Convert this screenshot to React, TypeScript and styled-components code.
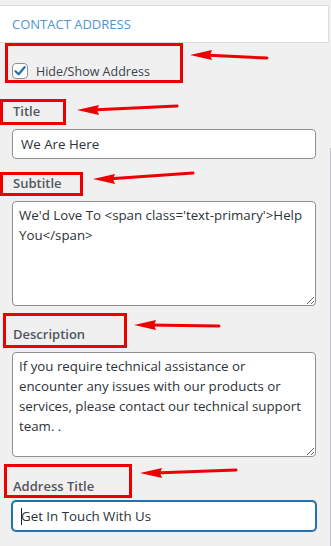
import styled, { createGlobalStyle } from 'styled-components';

const GlobalStyle = createGlobalStyle`
  html, body {
    margin: 0;
    padding: 0;
    background: #f0f0f1;
    font-family: 'Open Sans', 'Noto Sans', 'Liberation Sans', sans-serif;
  }
`;

const Page = styled.div`
  display: flex;
  flex-direction: row;
  min-height: 546px;
  width: 331px;
  padding-top: 5px;
  box-sizing: border-box;
  overflow: hidden;
`;

const Main = styled.div`
  width: 329px;
  flex-shrink: 0;
`;

const Rail = styled.div`
  flex: 1;
  display: flex;
  flex-direction: column;
`;

const RailLine = styled.div`
  margin-top: 143px;
  flex: 1;
  border-right: 1px solid #c3c4c7;
`;

const Header = styled.div`
  display: flex;
  align-items: center;
  height: 36px;
  padding-left: 12px;
  background: #fff;
  border-top: 1px solid #dcdcde;
  border-bottom: 1px solid #dcdcde;
  border-right: 1px solid #dcdcde;
  color: #4f94d4;
  font-size: 13px;
  text-transform: uppercase;
`;

const Fields = styled.div`
  display: flex;
  flex-direction: column;
`;

const NoteRow = styled.div<{ $top: number }>`
  display: flex;
  align-items: flex-start;
  margin-top: ${(p) => p.$top}px;
`;

const NoteBox = styled.div<{
  $left: number;
  $width: number;
  $height: number;
  $padLeft: number;
  $padBottom: number;
}>`
  display: flex;
  align-items: flex-end;
  box-sizing: border-box;
  flex-shrink: 0;
  margin-left: ${(p) => p.$left}px;
  width: ${(p) => p.$width}px;
  height: ${(p) => p.$height}px;
  padding-left: ${(p) => p.$padLeft}px;
  padding-bottom: ${(p) => p.$padBottom}px;
  border: 3px solid #ee0000;
`;

const Label = styled.label`
  font-size: 13px;
  line-height: 18px;
  font-weight: 600;
  color: #50575e;
  white-space: nowrap;
`;

const CheckRow = styled.label`
  display: flex;
  align-items: center;
  gap: 8px;
  height: 18px;
  font-size: 12.5px;
  color: #3c434a;
  white-space: nowrap;
`;

const CheckBox = styled.span`
  display: flex;
  align-items: center;
  justify-content: center;
  width: 16px;
  height: 16px;
  box-sizing: border-box;
  border: 1px solid #8c8f94;
  border-radius: 4px;
  background: #fff;
`;

const ArrowSvg = styled.svg<{ $gap: number; $top: number }>`
  flex-shrink: 0;
  margin-left: ${(p) => p.$gap}px;
  margin-top: ${(p) => p.$top}px;
  overflow: visible;
`;

const InputWrap = styled.div<{ $top: number }>`
  position: relative;
  margin: ${(p) => p.$top}px 0 0 12px;
  width: 304px;
`;

const TextInput = styled.input<{ $focus?: boolean }>`
  display: block;
  width: 100%;
  height: 30px;
  box-sizing: border-box;
  padding: 0 8px;
  border: 1px solid ${(p) => (p.$focus ? '#2271b1' : '#8c8f94')};
  box-shadow: ${(p) => (p.$focus ? '0 0 0 1px #2271b1' : 'none')};
  border-radius: 4px;
  background: #fff;
  font-family: inherit;
  font-size: 13.3px;
  color: #2c3338;
  outline: none;
`;

const TextArea = styled.textarea`
  display: block;
  width: 100%;
  height: 105px;
  box-sizing: border-box;
  padding: 3px 6px;
  border: 1px solid #8c8f94;
  border-radius: 4px;
  background: #fff;
  font-family: inherit;
  font-size: 13.3px;
  line-height: 20px;
  color: #2c3338;
  outline: none;
`;

const Caret = styled.span`
  position: absolute;
  left: 9px;
  top: 7px;
  width: 1px;
  height: 17px;
  background: #1d2327;
`;

type ArrowProps = { gap: number; top: number; length: number; rise: number };

const Arrow = ({ gap, top, length, rise }: ArrowProps) => {
  const h = 14;
  const cy = 7;
  return (
    <ArrowSvg $gap={gap} $top={top} width={length} height={h} viewBox={`0 0 ${length} ${h}`}>
      <line x1={14} y1={cy} x2={length} y2={cy + rise} stroke="#ee0000" strokeWidth={3} strokeLinecap="round" />
      <polygon points={`0,${cy} 22,${cy - 5} 20,${cy} 22,${cy + 5}`} fill="#ee0000" />
    </ArrowSvg>
  );
};

const Check = () => (
  <svg width="14" height="14" viewBox="0 0 14 14">
    <path d="M2.5 7.2 L5.6 10.2 L11.6 3.2" fill="none" stroke="#2271b1" strokeWidth={2.2} strokeLinecap="round" strokeLinejoin="round" />
  </svg>
);

export default function App() {
  return (
    <>
      <GlobalStyle />
      <Page>
        <Main>
          <Header>Contact Address</Header>
          <Fields>
            <NoteRow $top={0}>
              <NoteBox $left={5} $width={178} $height={40} $padLeft={4} $padBottom={0}>
                <CheckRow>
                  <CheckBox>
                    <Check />
                  </CheckBox>
                  Hide/Show Address
                </CheckRow>
              </NoteBox>
              <Arrow gap={7} top={5} length={77} rise={3} />
            </NoteRow>

            <NoteRow $top={16}>
              <NoteBox $left={0} $width={66} $height={26} $padLeft={10} $padBottom={2}>
                <Label>Title</Label>
              </NoteBox>
              <Arrow gap={11} top={4} length={100} rise={-4} />
            </NoteRow>
            <InputWrap $top={4}>
              <TextInput defaultValue="We Are Here" />
            </InputWrap>

            <NoteRow $top={13}>
              <NoteBox $left={0} $width={83} $height={24} $padLeft={10} $padBottom={1}>
                <Label>Subtitle</Label>
              </NoteBox>
              <Arrow gap={10} top={0} length={100} rise={-6} />
            </NoteRow>
            <InputWrap $top={5}>
              <TextArea defaultValue={"We'd Love To <span class='text-primary'>Help You</span>"} />
            </InputWrap>

            <NoteRow $top={7}>
              <NoteBox $left={3} $width={124} $height={35} $padLeft={7} $padBottom={2}>
                <Label>Description</Label>
              </NoteBox>
              <Arrow gap={7} top={5} length={85} rise={1} />
            </NoteRow>
            <InputWrap $top={4}>
              <TextArea defaultValue="If you require technical assistance or encounter any issues with our products or services, please contact our technical support team. ." />
            </InputWrap>

            <NoteRow $top={7}>
              <NoteBox $left={4} $width={128} $height={34} $padLeft={6} $padBottom={0}>
                <Label>Address Title</Label>
              </NoteBox>
              <Arrow gap={8} top={2} length={96} rise={-3} />
            </NoteRow>
            <InputWrap $top={3}>
              <TextInput $focus defaultValue="Get In Touch With Us" />
              <Caret />
            </InputWrap>
          </Fields>
        </Main>
        <Rail>
          <RailLine />
        </Rail>
      </Page>
    </>
  );
}
